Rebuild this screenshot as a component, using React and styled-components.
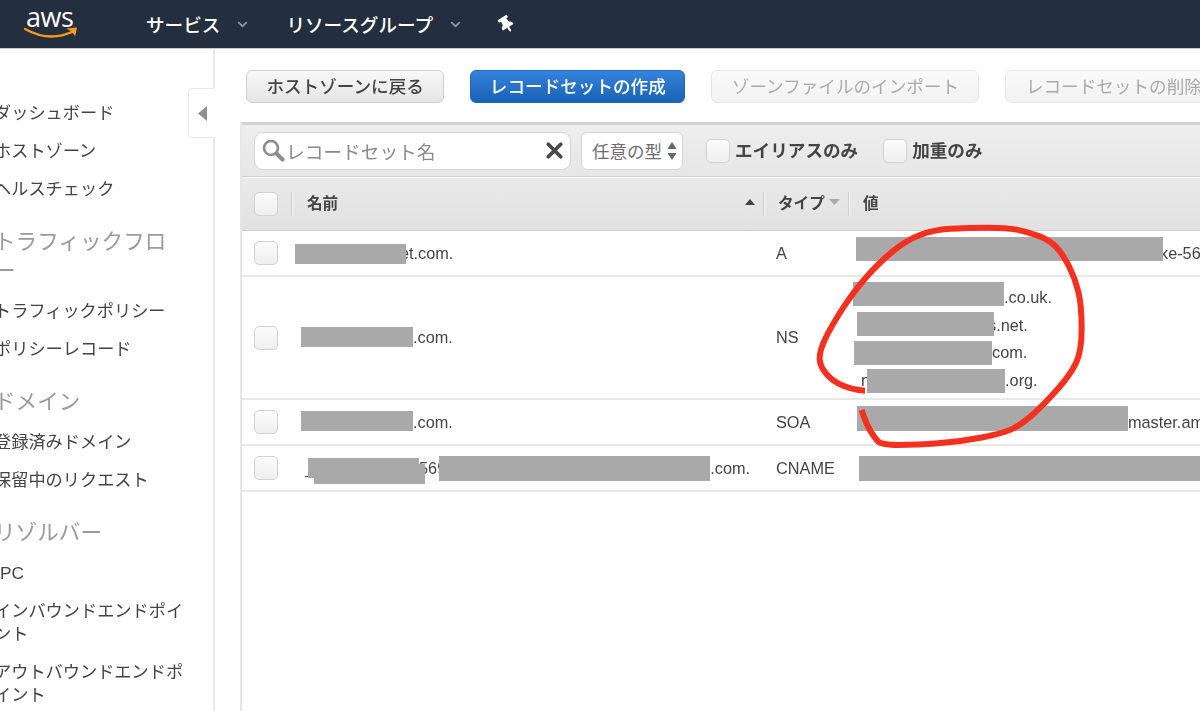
import styled, { createGlobalStyle } from "styled-components"
import { ChevronDown, X } from "lucide-react"
import { FaThumbtack } from "react-icons/fa"

const JP = `"Liberation Sans", "Noto Sans CJK JP", sans-serif`

const GlobalStyle = createGlobalStyle`
  html, body { margin: 0; height: 100%; overflow: hidden; background: #fff; }
  #root { height: 100%; }
  * { box-sizing: border-box; }
`

const circle = [
  [315, 527], [280, 525], [220, 500], [180, 455], [178, 410], [210, 340], [280, 230], [360, 140], [440, 75],
  [520, 45], [620, 38], [740, 38], [800, 50], [870, 75], [910, 120], [945, 190], [965, 270], [965, 410],
  [930, 480], [860, 560], [790, 625], [730, 655], [600, 680], [470, 690], [365, 690], [345, 670], [320, 630], [305, 585],
]

function smoothPath(points) {
  let d = `M${points[0][0]} ${points[0][1]}`
  for (let i = 1; i < points.length - 1; i++) {
    const mx = (points[i][0] + points[i + 1][0]) / 2
    const my = (points[i][1] + points[i + 1][1]) / 2
    d += ` Q${points[i][0]} ${points[i][1]} ${mx} ${my}`
  }
  const last = points[points.length - 1]
  return d + ` L${last[0]} ${last[1]}`
}

function App() {
  return (
    <Page>
      <GlobalStyle />
      <Header>
        <Logo>
          <LogoText>aws</LogoText>
          <svg width="54" height="13" viewBox="0 0 54 13">
            <path d="M1 2 Q26 16 50 4" fill="none" stroke="#f79a1e" strokeWidth="2.4" strokeLinecap="round" />
            <path d="M42 1.5 L53 0.5 L51 10 Q50 5 42 1.5Z" fill="#f79a1e" />
          </svg>
        </Logo>
        <NavItem>サービス<NavCaret size={15} strokeWidth={3} /></NavItem>
        <NavItem>リソースグループ<NavCaret size={15} strokeWidth={3} /></NavItem>
        <Pin />
      </Header>
      <Body>
        <Sidebar>
          <CollapseTab>
            <svg width="9" height="15" viewBox="0 0 9 15"><path d="M9 0 V15 L0 7.5Z" fill="#8f8f8f" /></svg>
          </CollapseTab>
          <SideList>
            <SideItem>ダッシュボード</SideItem>
            <SideItem>ホストゾーン</SideItem>
            <SideItem>ヘルスチェック</SideItem>
            <SideTitle>トラフィックフロ<br />ー</SideTitle>
            <SideItem>トラフィックポリシー</SideItem>
            <SideItem>ポリシーレコード</SideItem>
            <SideTitle>ドメイン</SideTitle>
            <SideItem>登録済みドメイン</SideItem>
            <SideItem>保留中のリクエスト</SideItem>
            <SideTitle>リゾルバー</SideTitle>
            <SideItem $nudge={-5.5}>VPC</SideItem>
            <SideItem>インバウンドエンドポイ<br />ント</SideItem>
            <SideItem>アウトバウンドエンドポ<br />イント</SideItem>
          </SideList>
        </Sidebar>
        <Main>
          <Actions>
            <Button>ホストゾーンに戻る</Button>
            <Button $kind="primary">レコードセットの作成</Button>
            <Button $kind="disabled">ゾーンファイルのインポート</Button>
            <Button $kind="disabled">レコードセットの削除</Button>
          </Actions>
          <Panel>
            <Toolbar>
              <SearchBox>
                <svg width="24" height="24" viewBox="0 0 24 24">
                  <circle cx="10" cy="9" r="7" fill="none" stroke="#8c8c8c" strokeWidth="2.6" />
                  <path d="M15.5 14.5 L21.5 20.5" stroke="#8c8c8c" strokeWidth="4" strokeLinecap="round" />
                </svg>
                <Placeholder>レコードセット名</Placeholder>
                <X size={25} strokeWidth={3.6} color="#484848" />
              </SearchBox>
              <TypeSelect>
                任意の型
                <svg width="10" height="18" viewBox="0 0 10 18">
                  <path d="M5 0 L9.5 7 H0.5Z M5 18 L9.5 11 H0.5Z" fill="#666" />
                </svg>
              </TypeSelect>
              <FilterLabel><FilterCheck />エイリアスのみ</FilterLabel>
              <FilterLabel><FilterCheck />加重のみ</FilterLabel>
            </Toolbar>
            <HeadRow>
              <HeadCell $first><Check /></HeadCell>
              <HeadCell $pad={16}>
                名前
                <svg width="10" height="6" viewBox="0 0 10 6"><path d="M5 0 L10 6 H0Z" fill="#444" /></svg>
              </HeadCell>
              <HeadCell>
                タイプ
                <svg width="11" height="6" viewBox="0 0 11 6"><path d="M5.5 6 L11 0 H0Z" fill="#ababab" /></svg>
              </HeadCell>
              <HeadCell>値</HeadCell>
            </HeadRow>

            <Row $height={46}>
              <CheckCell><Check /></CheckCell>
              <Cell>
                <Redact $ml={3} $w={111} $h={20} $shift={1} />
                <Tail $ml={-6}>et.com.</Tail>
              </Cell>
              <TypeCell>A</TypeCell>
              <Cell>
                <Redact $ml={7} $w={307} $h={24} $shift={-4} />
                <Tail $ml={-3}>ke-560.elb.amazonaws.com.</Tail>
              </Cell>
            </Row>
            <Row $height={123}>
              <CheckCell><Check /></CheckCell>
              <Cell>
                <Redact $ml={9} $w={112} $h={20} $shift={-1} />
                <Tail>.com.</Tail>
              </Cell>
              <TypeCell>NS</TypeCell>
              <ValueStack>
                <ValueLine>
                  <Redact $ml={4} $w={151} $h={24} $shift={-3} />
                  <Tail>.co.uk.</Tail>
                </ValueLine>
                <ValueLine>
                  <Redact $ml={8} $w={137} $h={24} $shift={-1} />
                  <Tail $ml={-6}>s.net.</Tail>
                </ValueLine>
                <ValueLine>
                  <Redact $ml={5} $w={138} $h={24} />
                  <Tail>com.</Tail>
                </ValueLine>
                <ValueLine>
                  <Tail $ml={12}>n</Tail>
                  <Redact $ml={-3} $w={138} $h={24} />
                  <Tail>.org.</Tail>
                </ValueLine>
              </ValueStack>
            </Row>
            <Row $height={46}>
              <CheckCell><Check /></CheckCell>
              <Cell>
                <Redact $ml={9} $w={112} $h={20} $shift={-1} />
                <Tail>.com.</Tail>
              </Cell>
              <TypeCell>SOA</TypeCell>
              <Cell>
                <Redact $ml={8} $w={271} $h={25} $shift={-4} />
                <Tail>master.amazon.com.</Tail>
              </Cell>
            </Row>
            <Row $height={46}>
              <CheckCell><Check /></CheckCell>
              <Cell>
                <Tail $ml={13}>_</Tail>
                <Redact $ml={-6} $w={111} $h={20}>
                  <RedactPatch />
                </Redact>
                <Tail>569</Tail>
                <Redact $ml={-7} $w={271} $h={25} />
                <Tail>.com.</Tail>
              </Cell>
              <TypeCell>CNAME</TypeCell>
              <Cell>
                <Redact $ml={10} $w={420} $h={25} />
              </Cell>
            </Row>
          </Panel>
        </Main>
      </Body>
      <Scribble viewBox="0 0 1320 810">
        <path d={smoothPath(circle)} fill="none" stroke="#f5301e" strokeWidth="18" strokeLinecap="butt" strokeLinejoin="round" />
      </Scribble>
    </Page>
  )
}

const Page = styled.div`
  position: relative;
  width: 1200px;
  height: 711px;
  overflow: hidden;
  display: flex;
  flex-direction: column;
  font-family: ${JP};
  color: #444;
  filter: blur(0.55px);
`
const Header = styled.header`
  flex: none;
  height: 49px;
  background: #232f3e;
  border-bottom: 1px solid #c9ccd0;
  display: flex;
  align-items: center;
  padding-left: 24px;
  color: #fff;
`
const Logo = styled.div`
  width: 122px;
  height: 48px;
  display: flex;
  flex-direction: column;
  padding-top: 1px;
  svg { margin-top: -5px; display: block; }
`
const LogoText = styled.span`
  font-family: "Open Sans", sans-serif;
  font-size: 27px;
  line-height: 31px;
  padding-left: 2px;
  letter-spacing: -0.5px;
`
const NavItem = styled.div`
  display: flex;
  align-items: center;
  font-size: 18.6px;
  font-weight: 500;
  margin-right: 36px;
  padding-bottom: 2px;
`
const NavCaret = styled(ChevronDown)`
  color: #8b96a3;
  margin-left: 15px;
  margin-top: 3px;
`
const Pin = styled(FaThumbtack)`
  width: 15px;
  height: 17px;
  transform: rotate(-32deg);
  color: #fff;
`
const Body = styled.div`
  flex: 1;
  display: flex;
  min-height: 0;
`
const Sidebar = styled.aside`
  position: relative;
  flex: none;
  width: 215px;
  border-right: 2px solid #e8e8e8;
  padding-top: 45px;
  overflow: visible;
`
const CollapseTab = styled.div`
  position: absolute;
  left: 188px;
  top: 39px;
  width: 27px;
  height: 50px;
  background: #fff;
  border: 1.5px solid #e8e8e8;
  border-right: none;
  border-radius: 5px 0 0 5px;
  display: flex;
  align-items: center;
  padding-left: 9px;
  z-index: 1;
`
const SideList = styled.nav`
  margin-left: -6px;
  display: flex;
  flex-direction: column;
`
const SideItem = styled.div`
  font-size: 17.2px;
  line-height: 23px;
  padding: 7.5px 0;
  margin-left: ${(p) => p.$nudge || 0}px;
  color: #444;
  white-space: nowrap;
`
const SideTitle = styled.div`
  font-size: 21.6px;
  line-height: 29px;
  color: #9a9a9a;
  margin: 19px 0 7px;
  white-space: nowrap;
`
const Main = styled.main`
  flex: 1;
  min-width: 0;
  padding: 21px 0 0 25px;
  display: flex;
  flex-direction: column;
  overflow: hidden;
`
const Actions = styled.div`
  flex: none;
  display: flex;
  gap: 26px;
  margin-left: 6px;
  height: 33px;
`
const buttonLook = {
  primary: "background: linear-gradient(#3583dc, #1a62b4); border-color: #1f68bb; color: #fff; font-weight: 500; padding: 0 18.6px 2px;",
  disabled: "background: linear-gradient(#fafafa, #f2f2f2); border-color: #e6e6e6; color: #aaa;",
  normal: "background: linear-gradient(#f8f8f8, #e5e5e5); border-color: #cfcfcf; color: #444; font-weight: 500;",
}
const Button = styled.div`
  flex: none;
  display: flex;
  align-items: center;
  padding: 0 19.4px 2px;
  font-size: 17.6px;
  border: 1px solid;
  border-radius: 6px;
  white-space: nowrap;
  ${(p) => buttonLook[p.$kind || "normal"]}
`
const Panel = styled.section`
  flex: 1;
  margin-top: 19px;
  border-left: 2px solid #e6e6e6;
  display: flex;
  flex-direction: column;
  width: 960px;
`
const Toolbar = styled.div`
  flex: none;
  height: 55px;
  background: linear-gradient(#eeeeee, #e6e6e6);
  border-top: 3px solid #d2d2d2;
  border-bottom: 1px solid #cfcfcf;
  display: flex;
  align-items: center;
  padding-left: 12px;
`
const SearchBox = styled.div`
  flex: none;
  width: 317px;
  height: 38px;
  background: #fff;
  border: 1px solid #d6d6d6;
  border-radius: 9px;
  display: flex;
  align-items: center;
  padding: 0 3px 0 6px;
`
const Placeholder = styled.span`
  flex: 1;
  font-size: 18.7px;
  color: #8a8a8a;
  margin-left: 1px;
`
const TypeSelect = styled.div`
  flex: none;
  width: 102px;
  height: 38px;
  margin: 0 23px 0 10px;
  background: #fff;
  border: 1px solid #d6d6d6;
  border-radius: 6px;
  display: flex;
  align-items: center;
  justify-content: space-between;
  padding: 0 5px 0 10px;
  font-size: 17.5px;
  color: #6e6e6e;
`
const Check = styled.span`
  flex: none;
  display: block;
  width: 24px;
  height: 24px;
  background: linear-gradient(#fbfbfb, #efefef);
  border: 1px solid #d2d2d2;
  border-radius: 5px;
`
const FilterCheck = styled(Check)`
  margin-top: 2px;
`
const FilterLabel = styled.label`
  flex: none;
  display: flex;
  align-items: center;
  gap: 5px;
  margin-right: 25px;
  padding-bottom: 2px;
  font-size: 17.6px;
  font-weight: 700;
  color: #444;
`
const columns = "49px 472px 85px 1fr"
const HeadRow = styled.div`
  flex: none;
  height: 54px;
  display: grid;
  grid-template-columns: ${columns};
  background: linear-gradient(#e9e9e9, #e2e2e2);
  border-top: 1px solid #f6f6f6;
  border-bottom: 1px solid #cdcdcd;
`
const HeadCell = styled.div`
  position: relative;
  display: flex;
  align-items: center;
  justify-content: space-between;
  padding: ${(p) => (p.$first ? "0 0 0 12px" : `0 8px 4px ${p.$pad || 15}px`)};
  font-size: 15.6px;
  font-weight: 700;
  color: #444;
  ${(p) => !p.$first && `
    &::before {
      content: "";
      position: absolute;
      left: 0;
      top: 14px;
      bottom: 14px;
      width: 1px;
      background: #cfcfcf;
      box-shadow: 1px 0 0 #f4f4f4;
    }
  `}
  &:last-child { justify-content: flex-start; }
`
const Row = styled.div`
  flex: none;
  height: ${(p) => p.$height}px;
  display: grid;
  grid-template-columns: ${columns};
  border-bottom: 2px solid #e8e8e8;
  font-size: 16.3px;
  color: #444;
`
const Cell = styled.div`
  min-width: 0;
  display: flex;
  align-items: center;
  padding-left: 1px;
  white-space: nowrap;
`
const CheckCell = styled(Cell)`
  padding-left: 12px;
`
const TypeCell = styled(Cell)`
  padding-left: 13px;
`
const ValueStack = styled.div`
  min-width: 0;
  display: flex;
  flex-direction: column;
  justify-content: center;
  padding: 3px 0 0 1px;
  white-space: nowrap;
`
const ValueLine = styled.div`
  height: 27.7px;
  display: flex;
  align-items: center;
`
const Redact = styled.span`
  position: relative;
  z-index: 1;
  flex: none;
  display: block;
  width: ${(p) => p.$w}px;
  height: ${(p) => p.$h}px;
  margin-left: ${(p) => p.$ml || 0}px;
  background: #a9a9a9;
  transform: translateY(${(p) => p.$shift || 0}px);
`
const RedactPatch = styled.span`
  position: absolute;
  left: 6px;
  top: 6px;
  width: 100%;
  height: 100%;
  background: #a9a9a9;
`
const Tail = styled.span`
  flex: none;
  margin-left: ${(p) => p.$ml || 0}px;
`
const Scribble = styled.svg`
  position: absolute;
  left: 760px;
  top: 215px;
  width: 440px;
  height: 270px;
  z-index: 2;
`

export default App
